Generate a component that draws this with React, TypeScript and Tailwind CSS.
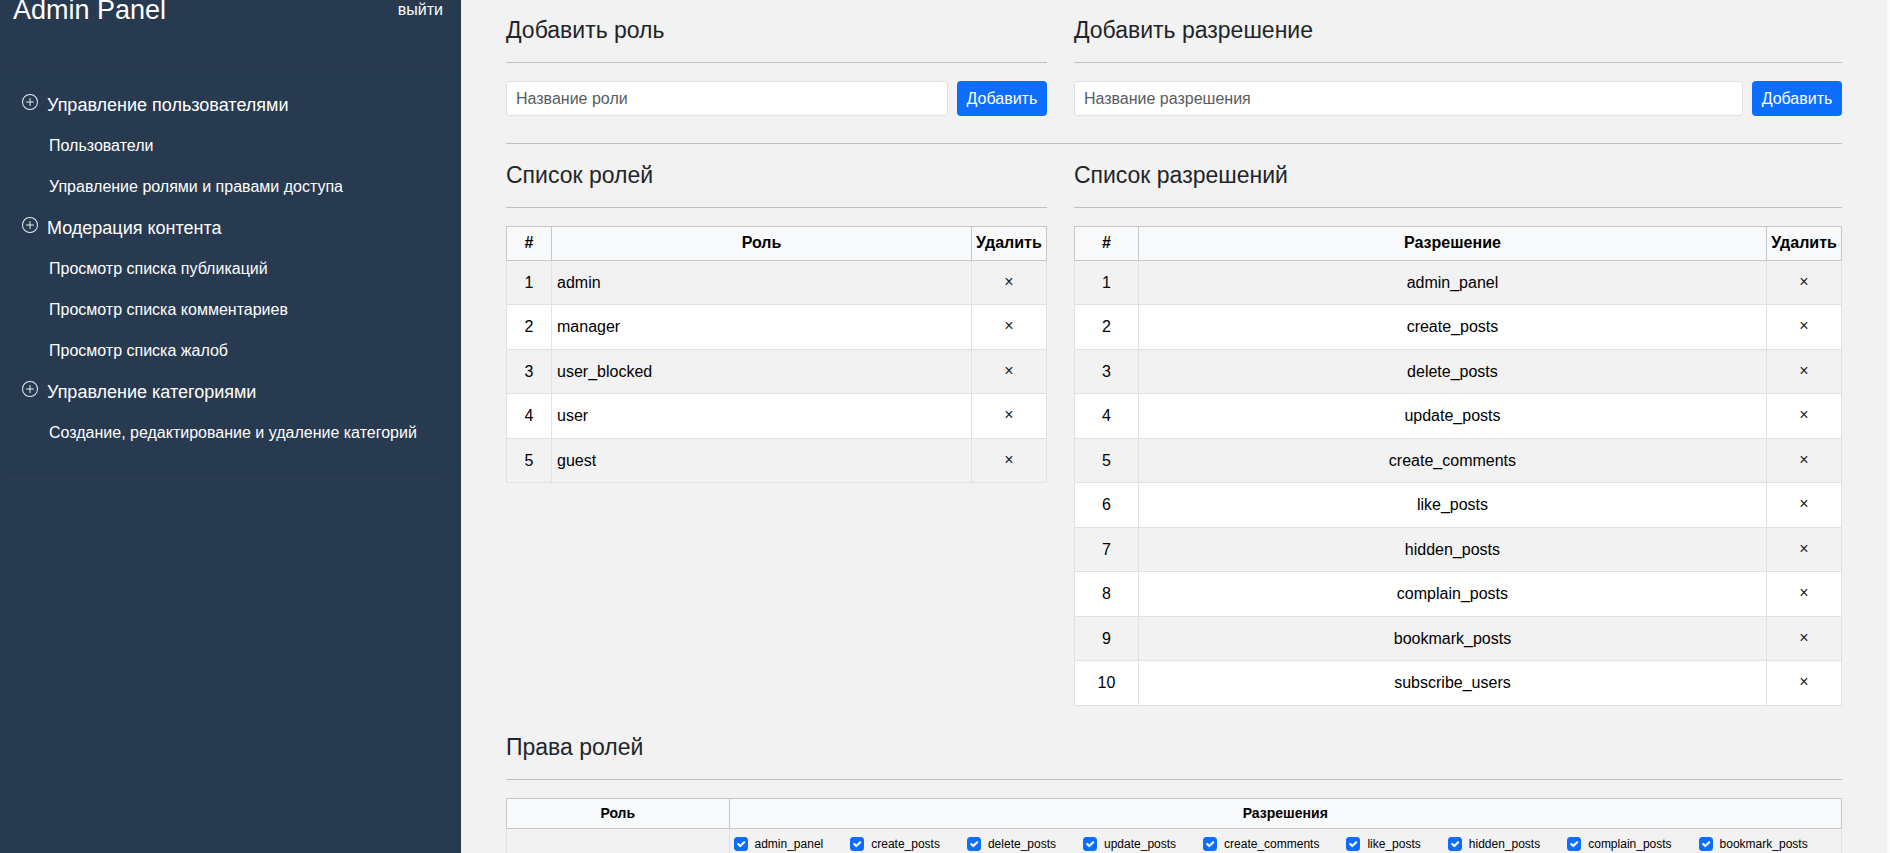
import { BsPlusCircle } from "react-icons/bs";

const menu = [
  { title: "Управление пользователями", items: ["Пользователи", "Управление ролями и правами доступа"] },
  {
    title: "Модерация контента",
    items: ["Просмотр списка публикаций", "Просмотр списка комментариев", "Просмотр списка жалоб"],
  },
  { title: "Управление категориями", items: ["Создание, редактирование и удаление категорий"] },
];

const roles = ["admin", "manager", "user_blocked", "user", "guest"];

const permissions = [
  "admin_panel",
  "create_posts",
  "delete_posts",
  "update_posts",
  "create_comments",
  "like_posts",
  "hidden_posts",
  "complain_posts",
  "bookmark_posts",
  "subscribe_users",
];

function Sidebar() {
  return (
    <aside className="w-[461px] shrink-0 bg-[#283a50] pl-1 pr-[18px] text-white">
      <header className="flex h-[67px] items-start justify-between pl-[9px]">
        <h1 className="text-[27px] leading-5">Admin Panel</h1>
        <a href="#logout" className="text-base leading-5">
          выйти
        </a>
      </header>
      <hr className="border-[#25354a]" />
      <nav className="pb-[19px] pt-4">
        {menu.map((group) => (
          <section key={group.title}>
            <h2>
              <button type="button" className="flex h-[41px] w-full items-center gap-[9px] pl-[18px] text-left text-lg">
                <BsPlusCircle className="mb-[5px] size-4 text-[#eceef0]" />
                {group.title}
              </button>
            </h2>
            <ul>
              {group.items.map((item) => (
                <li key={item}>
                  <a href="#section" className="flex h-[41px] items-center pl-[45px] text-base">
                    {item}
                  </a>
                </li>
              ))}
            </ul>
          </section>
        ))}
      </nav>
      <hr className="border-[#25354a]" />
    </aside>
  );
}

function Heading({ children }: { children: string }) {
  return <h2 className="border-b border-[#bfbfbf] pb-[18px] text-[23px] leading-7 text-[#212529]">{children}</h2>;
}

function AddForm({ title, placeholder }: { title: string; placeholder: string }) {
  return (
    <>
      <Heading>{title}</Heading>
      <form className="mt-[18px] flex gap-[9px]" onSubmit={(e) => e.preventDefault()}>
        <input
          type="text"
          aria-label={placeholder}
          placeholder={placeholder}
          className="h-[35px] min-w-0 grow rounded border border-[#dee2e6] bg-white px-[9px] text-base placeholder:text-[#595c5f]"
        />
        <button type="submit" className="h-[35px] w-[90px] rounded bg-[#0d6efd] text-base text-white">
          Добавить
        </button>
      </form>
    </>
  );
}

const headCell = "border border-[#c6c7c8] bg-[#f8f9fa] pb-0.5 font-bold";
const cell = "border border-[#dee2e6]";

function ItemTable({ title, column, items, wide }: { title: string; column: string; items: string[]; wide?: boolean }) {
  return (
    <>
      <Heading>{title}</Heading>
      <table className="mt-[18px] w-full table-fixed border-collapse text-center text-base text-black">
        <thead>
          <tr className="h-[34px]">
            <th className={`${headCell} ${wide ? "w-16" : "w-[45px]"}`}>#</th>
            <th className={headCell}>{column}</th>
            <th className={`${headCell} w-[75px]`}>Удалить</th>
          </tr>
        </thead>
        <tbody>
          {items.map((item, i) => (
            <tr key={item} className="h-11 even:h-[45px] even:bg-white">
              <td className={cell}>{i + 1}</td>
              <td className={`${cell} ${wide ? "" : "pl-[5px] text-left"}`}>{item}</td>
              <td className={cell}>
                <button type="button" aria-label={`Удалить ${item}`} className="block w-full pb-0.5 text-[#212529]">
                  ×
                </button>
              </td>
            </tr>
          ))}
        </tbody>
      </table>
    </>
  );
}

function PermissionBox({ name }: { name: string }) {
  return (
    <label className="flex items-center gap-[7px]">
      <span className="grid size-[14px]">
        <input
          type="checkbox"
          defaultChecked
          className="peer col-start-1 row-start-1 size-[14px] appearance-none rounded-[3px] border border-[#dee2e6] bg-white checked:border-[#0d6efd] checked:bg-[#0d6efd]"
        />
        <svg
          viewBox="0 0 20 20"
          className="pointer-events-none invisible col-start-1 row-start-1 size-[14px] peer-checked:visible"
          fill="none"
          stroke="#fff"
          strokeWidth="3"
          strokeLinecap="round"
          strokeLinejoin="round"
        >
          <path d="m6 10 3 3 5.5-5.5" />
        </svg>
      </span>
      {name}
    </label>
  );
}

function RoleRights() {
  return (
    <section className="mt-[27px]">
      <Heading>Права ролей</Heading>
      <table className="mt-[18px] w-full table-fixed border-collapse text-black">
        <thead>
          <tr className="h-[30px] text-sm">
            <th className={`${headCell} w-1/6`}>Роль</th>
            <th className={headCell}>Разрешения</th>
          </tr>
        </thead>
        <tbody>
          <tr className="h-16">
            <td className={cell} aria-label={roles[0]} />
            <td className={`${cell} px-1 py-2 align-top`}>
              <div className="flex flex-wrap gap-x-[27px] gap-y-2 text-xs leading-[14px]">
                {permissions.slice(0, 9).map((p) => (
                  <PermissionBox key={p} name={p} />
                ))}
              </div>
            </td>
          </tr>
        </tbody>
      </table>
    </section>
  );
}

export default function App() {
  return (
    <div className="flex h-screen overflow-hidden bg-[#f2f2f2] font-['Liberation_Sans',Arial,sans-serif]">
      <Sidebar />
      <main className="min-w-0 grow border-r-[3px] border-[#fcfcfc] pl-[45px] pr-[45px] pt-4">
        <div className="grid grid-cols-12 gap-x-[27px]">
          <div className="col-span-5">
            <AddForm title="Добавить роль" placeholder="Название роли" />
          </div>
          <div className="col-span-7">
            <AddForm title="Добавить разрешение" placeholder="Название разрешения" />
          </div>
        </div>
        <hr className="mb-[17px] mt-[27px] border-[#bfbfbf]" />
        <div className="grid grid-cols-12 gap-x-[27px]">
          <section className="col-span-5">
            <ItemTable title="Список ролей" column="Роль" items={roles} />
          </section>
          <section className="col-span-7">
            <ItemTable title="Список разрешений" column="Разрешение" items={permissions} wide />
          </section>
        </div>
        <RoleRights />
      </main>
    </div>
  );
}
